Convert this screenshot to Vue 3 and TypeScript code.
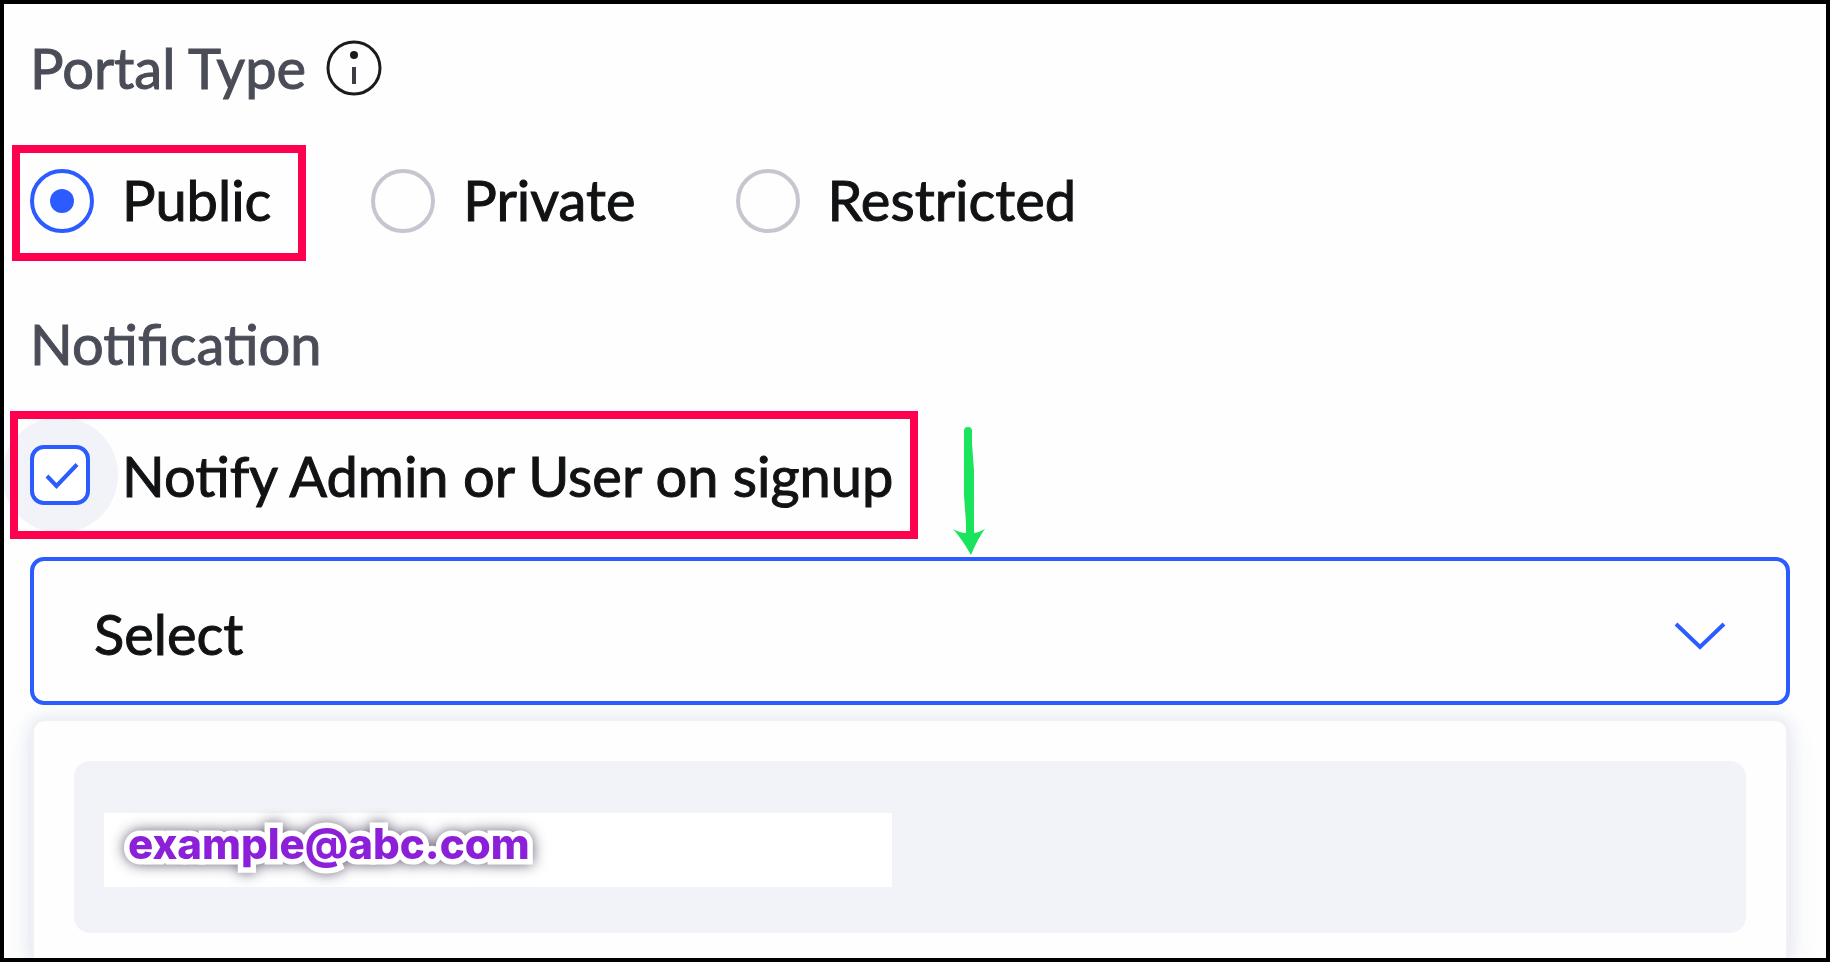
<script setup lang="ts">
import { ref } from 'vue'

interface PortalType {
  value: string
  label: string
}

const portalTypes: PortalType[] = [
  { value: 'public', label: 'Public' },
  { value: 'private', label: 'Private' },
  { value: 'restricted', label: 'Restricted' },
]

const portalType = ref<string>('public')
const notifyOnSignup = ref<boolean>(true)
const recipient = ref<string>('')
const recipients: string[] = ['example@abc.com']
</script>

<template>
  <main class="page">
    <fieldset class="group">
      <legend class="heading">
        Portal Type
        <button type="button" class="info" aria-label="About portal types">
          <svg viewBox="0 0 56 56" width="56" height="56" aria-hidden="true">
            <circle cx="28" cy="28" r="26" fill="none" stroke="#1b1b1d" stroke-width="3" />
            <circle cx="28" cy="15" r="4" fill="#1b1b1d" />
            <path d="M28 27V44" stroke="#3c3d42" stroke-width="4" />
          </svg>
        </button>
      </legend>
      <div class="radios">
        <label
          v-for="type in portalTypes"
          :key="type.value"
          class="choice radio-choice"
          :class="{ marked: type.value === portalType }"
        >
          <input v-model="portalType" type="radio" name="portal-type" :value="type.value" class="radio" />
          <span class="choice-text">{{ type.label }}</span>
        </label>
      </div>
    </fieldset>

    <section class="group">
      <h2 class="heading notification-heading">Notification</h2>
      <div class="notify">
        <label class="choice check-choice marked">
          <span class="check-box">
            <input v-model="notifyOnSignup" type="checkbox" class="check" />
            <svg v-if="notifyOnSignup" class="tick" viewBox="0 0 60 60" aria-hidden="true">
              <path d="M17 31L26.500 41L47 19.500" fill="none" stroke="#2c5cff" stroke-width="4" />
            </svg>
          </span>
          <span class="choice-text">Notify Admin or User on signup</span>
        </label>
        <svg class="arrow" viewBox="0 0 32 128" width="32" height="128" aria-hidden="true">
          <path
            d="M11 4Q11 0 15 0Q19 0 19 4V16L21 44V106Q27 105 32 102Q25 111 18 128Q9 112 0 102Q7 106 13 106V96L11 68Z"
            fill="#1ae45c"
          />
        </svg>
      </div>

      <div class="select-wrap">
        <select v-model="recipient" class="select" aria-label="Notification recipient">
          <option value="">Select</option>
          <option v-for="email in recipients" :key="email" :value="email">{{ email }}</option>
        </select>
        <svg class="chevron" viewBox="0 0 52 28" width="52" height="28" aria-hidden="true">
          <path d="M2 2L26 25L50 2" fill="none" stroke="#2c5cff" stroke-width="4" />
        </svg>
      </div>
    </section>

    <div class="menu">
      <button
        v-for="email in recipients"
        :key="email"
        type="button"
        class="menu-item"
        @click="recipient = email"
      >
        <span class="email"><span class="email-text">{{ email }}</span></span>
      </button>
    </div>
  </main>
</template>

<style>
body {
  margin: 0;
}
</style>

<style scoped>
* {
  box-sizing: border-box;
}

.page {
  display: flex;
  flex-direction: column;
  min-height: 100vh;
  padding: 30px 36px 0 26px;
  border: 4px solid #000;
  overflow: hidden;
  background: #fefefe;
  color: #111214;
  font-family: Lato, "Liberation Sans", sans-serif;
  font-size: 56px;
  line-height: 68px;
  -webkit-text-stroke: 1px currentcolor;
}

.group {
  min-width: 0;
  margin: 0;
  padding: 0;
  border: 0;
}

.heading {
  display: flex;
  align-items: center;
  gap: 20px;
  margin: 0;
  padding: 0;
  color: #4a4d57;
  font-size: 56px;
  font-weight: 400;
}

.info {
  display: flex;
  padding: 0;
  border: 0;
  background: none;
}

.radios {
  display: flex;
  gap: 47px;
  margin: 43px 0 0 -18px;
}

.choice {
  display: flex;
  align-items: center;
  border: 8px solid transparent;
  white-space: nowrap;
}

.marked {
  border-color: #ff004f;
}

.radio-choice {
  gap: 28px;
  height: 116px;
  padding: 0 27px 4px 10px;
}

.radio-choice .choice-text {
  padding-bottom: 2px;
}

.radio {
  display: grid;
  place-items: center;
  flex: none;
  width: 64px;
  height: 64px;
  margin: 0;
  border: 4px solid #c6c6d0;
  border-radius: 50%;
  appearance: none;
}

.radio:checked {
  border-color: #2c5cff;
}

.radio:checked::before {
  content: "";
  width: 24px;
  height: 24px;
  border-radius: 50%;
  background: #2c5cff;
}

.notification-heading {
  margin-top: 49px;
}

.notify {
  position: relative;
  z-index: 0;
  width: max-content;
  margin: 33px 0 0 -20px;
}

.check-choice {
  gap: 32px;
  height: 128px;
  padding: 0 17px 0 12px;
}

.check-choice .choice-text {
  padding-top: 2px;
}

.check-box {
  position: relative;
  flex: none;
  width: 60px;
  height: 60px;
}

.check-box::before {
  content: "";
  position: absolute;
  z-index: -1;
  inset: -28px;
  border-radius: 50%;
  background: #f2f3f8;
}

.check {
  display: block;
  width: 60px;
  height: 60px;
  margin: 0;
  border: 4px solid #2c5cff;
  border-radius: 14px;
  background: #fff;
  appearance: none;
}

.tick {
  position: absolute;
  inset: 0;
  pointer-events: none;
}

.arrow {
  position: absolute;
  top: 16px;
  left: calc(100% + 35px);
}

.select-wrap {
  position: relative;
  z-index: 1;
  margin-top: 18px;
}

.select {
  display: block;
  width: 100%;
  height: 148px;
  padding: 6px 120px 0 60px;
  border: 4px solid #2c5cff;
  border-radius: 14px;
  background: #fefefe;
  color: #111214;
  font: inherit;
  appearance: none;
}

.chevron {
  position: absolute;
  top: 65px;
  right: 64px;
  pointer-events: none;
}

.menu {
  flex: 1;
  margin: 13px 1px 0;
  padding: 40px 40px 25px;
  border: 3px solid #f1f1f3;
  border-bottom: 0;
  border-radius: 14px 14px 0 0;
  background: #fefefe;
  box-shadow: 0 12px 32px rgb(60 80 130 / 8%), 0 0 16px rgb(40 90 190 / 12%);
}

.menu-item {
  display: flex;
  align-items: center;
  width: 100%;
  height: 172px;
  padding: 6px 30px 0;
  border: 0;
  border-radius: 16px;
  background: #f2f3f8;
}

.email {
  flex: 0 1 788px;
  height: 74px;
  padding-left: 24px;
  background: #fff;
  color: #8c20d8;
  font-family: Inter, "Open Sans", sans-serif;
  font-size: 42px;
  font-weight: 800;
  line-height: 62px;
  text-align: left;
}

.email-text {
  display: inline-block;
  -webkit-text-stroke: 11px #fff;
  paint-order: stroke fill;
  stroke-linejoin: round;
  filter: drop-shadow(0 0 7px rgb(40 30 60 / 70%));
}
</style>
